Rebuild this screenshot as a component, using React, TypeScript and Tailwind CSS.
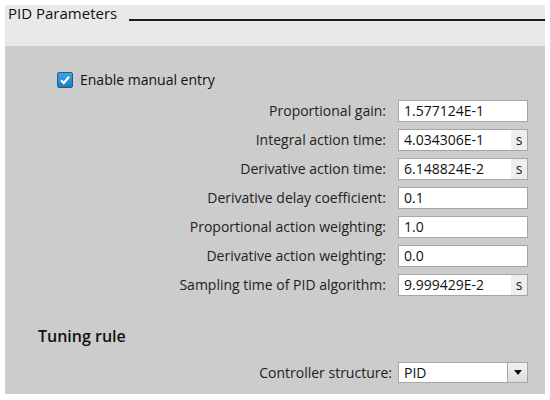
import React from 'react';

const rows = [
  { label: 'Proportional gain:', value: '1.577124E-1' },
  { label: 'Integral action time:', value: '4.034306E-1', unit: 's' },
  { label: 'Derivative action time:', value: '6.148824E-2', unit: 's' },
  { label: 'Derivative delay coefficient:', value: '0.1' },
  { label: 'Proportional action weighting:', value: '1.0' },
  { label: 'Derivative action weighting:', value: '0.0' },
  { label: 'Sampling time of PID algorithm:', value: '9.999429E-2', unit: 's' },
];

function Field({ value, unit }: { value: string; unit?: string }) {
  return (
    <div className="flex h-[22px] w-[130px] border border-[#a6a6a6] bg-white">
      <div className="flex flex-1 items-center pl-[5px] text-[#111]">{value}</div>
      {unit && (
        <div className="flex w-[16px] items-center justify-center bg-[#eeeeee] text-[#222]">{unit}</div>
      )}
    </div>
  );
}

export default function App() {
  return (
    <div
      className="h-[400px] w-[550px] bg-white pt-[5px] pl-[5px] text-[14px] leading-none text-[#222]"
      style={{ fontFamily: '"Open Sans", "Noto Sans", sans-serif' }}
    >
      <div className="flex h-[389px] w-[540px] flex-col">
        <div className="flex h-[41px] items-start gap-[12px] bg-[#e9e9e9] pl-[3px]">
          <span className="mt-[1px] text-[15px] text-[#111] leading-none whitespace-nowrap">PID Parameters</span>
          <div className="mt-[14px] h-[2px] flex-1 bg-[#1c1c1c]" />
        </div>
        <div className="flex flex-1 flex-col bg-[#cccccc] pr-[17px]">
          <div className="mt-[26px] ml-[52px] flex items-center gap-[7px]">
            <div className="flex h-[16px] w-[16px] items-center justify-center rounded-[2px] border border-[#1b5f93] bg-gradient-to-b from-[#3fa3e3] to-[#1c7cc4]">
              <svg width="12" height="12" viewBox="0 0 12 12">
                <path d="M2 6.2 L4.8 9 L10 2.8" stroke="white" strokeWidth="2.2" fill="none" />
              </svg>
            </div>
            <span className="text-[#111]">Enable manual entry</span>
          </div>
          <div className="mt-[12px] flex flex-col gap-[7px]">
            {rows.map((r) => (
              <div key={r.label} className="flex items-center justify-end gap-[12px]">
                <span className="whitespace-nowrap">{r.label}</span>
                <Field value={r.value} unit={r.unit} />
              </div>
            ))}
          </div>
          <div className="mt-[32px] ml-[33px] text-[16px] font-semibold text-[#111]">Tuning rule</div>
          <div className="mt-[18px] flex items-center justify-end gap-[6px]">
            <span className="whitespace-nowrap">Controller structure:</span>
            <div className="flex h-[21px] w-[130px] border border-[#a6a6a6] bg-white">
              <div className="flex flex-1 items-center pl-[5px] text-[#111]">PID</div>
              <div className="flex w-[20px] items-center justify-center border-l border-[#a6a6a6] bg-gradient-to-b from-[#f2f2f2] to-[#dcdcdc]">
                <svg width="8" height="5" viewBox="0 0 8 5">
                  <path d="M0 0 H8 L4 5 Z" fill="#111" />
                </svg>
              </div>
            </div>
          </div>
        </div>
      </div>
    </div>
  );
}
